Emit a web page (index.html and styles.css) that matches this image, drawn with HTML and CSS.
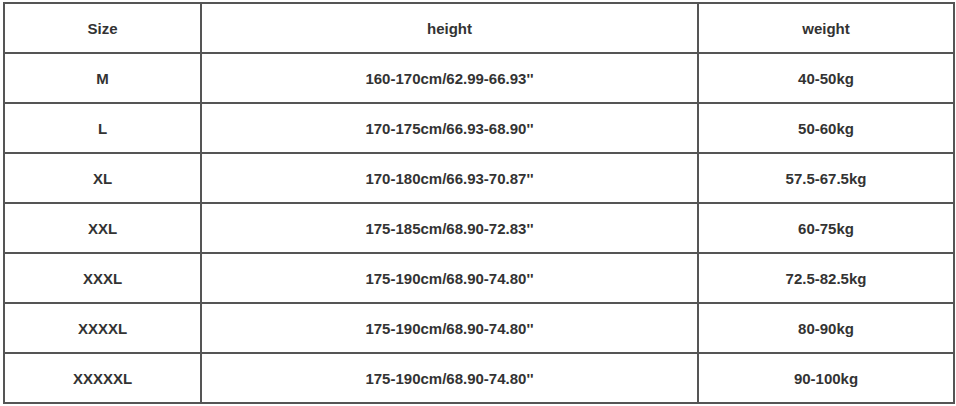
FILE: index.html
```html
<!DOCTYPE html>
<html>
<head>
<meta charset="utf-8">
<link rel="stylesheet" href="styles.css">
</head>
<body>
<table class="size-table">
  <colgroup>
    <col class="c-size">
    <col class="c-height">
    <col class="c-weight">
  </colgroup>
  <tr><td>Size</td><td>height</td><td>weight</td></tr>
  <tr><td>M</td><td>160-170cm/62.99-66.93''</td><td>40-50kg</td></tr>
  <tr><td>L</td><td>170-175cm/66.93-68.90''</td><td>50-60kg</td></tr>
  <tr><td>XL</td><td>170-180cm/66.93-70.87''</td><td>57.5-67.5kg</td></tr>
  <tr><td>XXL</td><td>175-185cm/68.90-72.83''</td><td>60-75kg</td></tr>
  <tr><td>XXXL</td><td>175-190cm/68.90-74.80''</td><td>72.5-82.5kg</td></tr>
  <tr><td>XXXXL</td><td>175-190cm/68.90-74.80''</td><td>80-90kg</td></tr>
  <tr><td>XXXXXL</td><td>175-190cm/68.90-74.80''</td><td>90-100kg</td></tr>
</table>
</body>
</html>
```

FILE: styles.css
```css
html, body {
  margin: 0;
  padding: 0;
  background: #ffffff;
}
body {
  padding: 2px 0 0 3px;
  font-family: "Liberation Sans", Arial, sans-serif;
}
.size-table {
  border-collapse: collapse;
  table-layout: fixed;
  width: 950px;
}
.c-size { width: 197px; }
.c-height { width: 497px; }
.c-weight { width: 256px; }
.size-table td {
  border: 2px solid #555555;
  height: 48px;
  padding: 0;
  text-align: center;
  vertical-align: middle;
  font-size: 15px;
  font-weight: bold;
  color: #333333;
}
```
